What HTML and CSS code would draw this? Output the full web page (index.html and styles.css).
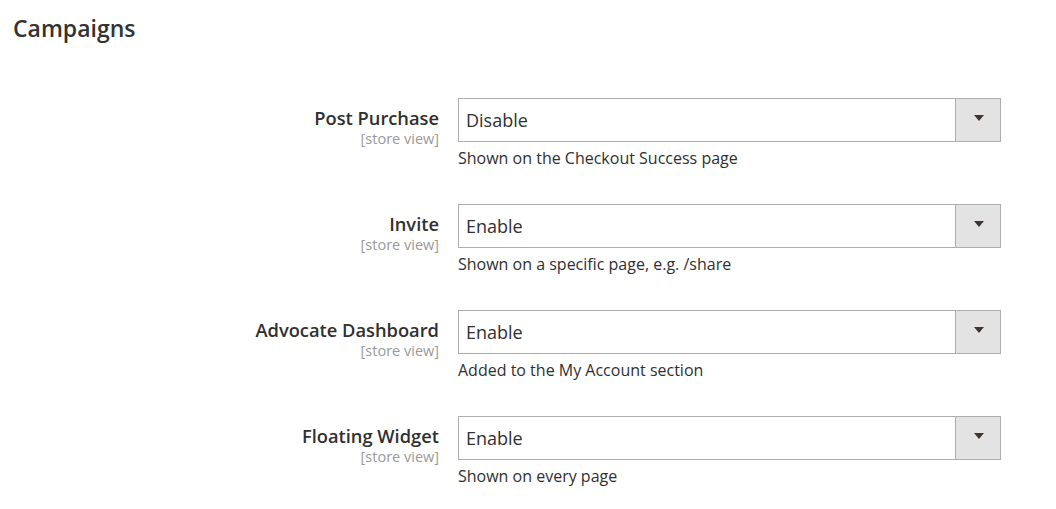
FILE: index.html
```html
<!DOCTYPE html>
<html lang="en">
<head>
    <meta charset="UTF-8">
    <title>Campaigns</title>
    <link rel="stylesheet" href="styles.css">
</head>
<body>
<div class="section">
    <h2 class="section-title">Campaigns</h2>
    <div class="fields">
        <div class="field">
            <div class="field-label">
                <span class="label-text">Post Purchase</span>
                <span class="scope">[store view]</span>
            </div>
            <div class="field-control">
                <div class="select">
                    <span class="select-value">Disable</span>
                    <span class="select-arrow"></span>
                </div>
                <p class="note">Shown on the Checkout Success page</p>
            </div>
        </div>
        <div class="field">
            <div class="field-label">
                <span class="label-text">Invite</span>
                <span class="scope">[store view]</span>
            </div>
            <div class="field-control">
                <div class="select">
                    <span class="select-value">Enable</span>
                    <span class="select-arrow"></span>
                </div>
                <p class="note">Shown on a specific page, e.g. /share</p>
            </div>
        </div>
        <div class="field">
            <div class="field-label">
                <span class="label-text">Advocate Dashboard</span>
                <span class="scope">[store view]</span>
            </div>
            <div class="field-control">
                <div class="select">
                    <span class="select-value">Enable</span>
                    <span class="select-arrow"></span>
                </div>
                <p class="note">Added to the My Account section</p>
            </div>
        </div>
        <div class="field">
            <div class="field-label">
                <span class="label-text">Floating Widget</span>
                <span class="scope">[store view]</span>
            </div>
            <div class="field-control">
                <div class="select">
                    <span class="select-value">Enable</span>
                    <span class="select-arrow"></span>
                </div>
                <p class="note">Shown on every page</p>
            </div>
        </div>
    </div>
</div>
</body>
</html>
```

FILE: styles.css
```css
body {
    margin: 0;
    padding: 0;
    background-color: #fff;
    font-family: 'Open Sans', 'Noto Sans', sans-serif;
    color: #303030;
}

.section {
    padding: 12px 13px 0 13px;
}

.section-title {
    margin: 0;
    font-size: 23px;
    font-weight: 600;
    line-height: 32px;
    color: #333;
}

.fields {
    padding-top: 54px;
}

.field {
    display: flex;
    height: 106px;
}

.field-label {
    width: 426px;
    padding-right: 19px;
    display: flex;
    flex-direction: column;
    align-items: flex-end;
    padding-top: 8px;
}

.label-text {
    font-size: 18.3px;
    font-weight: 600;
    line-height: 24px;
    color: #303030;
}

.scope {
    font-size: 14.5px;
    line-height: 17px;
    color: #999;
}

.field-control {
    width: 543px;
}

.select {
    display: flex;
    height: 44px;
    border: 1px solid #adadad;
    box-sizing: border-box;
    background-color: #fff;
}

.select-value {
    flex: 1;
    padding-left: 7px;
    font-size: 18px;
    line-height: 42px;
    color: #303030;
}

.select-arrow {
    width: 44px;
    background-color: #e3e3e3;
    border-left: 1px solid #adadad;
    position: relative;
}

.select-arrow::after {
    content: '';
    position: absolute;
    left: 18px;
    top: 16px;
    border-left: 5px solid transparent;
    border-right: 5px solid transparent;
    border-top: 6px solid #41362f;
}

.note {
    margin: 5px 0 0 0;
    font-size: 16px;
    line-height: 22px;
    color: #303030;
}
```
